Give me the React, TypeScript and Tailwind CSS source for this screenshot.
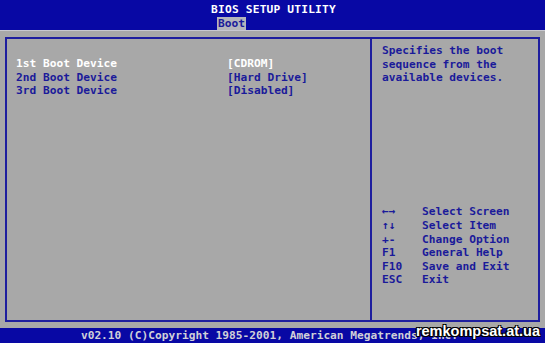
import React from "react";

const mono = { fontFamily: '"DejaVu Sans Mono", "Liberation Mono", monospace' };

export default function App() {
  const rows = [
    { label: "1st Boot Device", value: "[CDROM]", active: true },
    { label: "2nd Boot Device", value: "[Hard Drive]", active: false },
    { label: "3rd Boot Device", value: "[Disabled]", active: false },
  ];
  const keys = [
    ["←→", "Select Screen"],
    ["↑↓", "Select Item"],
    ["+-", "Change Option"],
    ["F1", "General Help"],
    ["F10", "Save and Exit"],
    ["ESC", "Exit"],
  ];
  return (
    <div
      className="relative w-[545px] h-[343px] flex flex-col bg-[#a8a8a8] overflow-hidden font-bold text-[11.2px] leading-[13.6px]"
      style={mono}
    >
      <div className="h-[30px] bg-[#0808a4] flex flex-col items-center pt-[3px]">
        <div className="text-white tracking-[0.2px] h-[14px] pl-[2px]">BIOS SETUP UTILITY</div>
        <div className="h-[13px] flex w-full justify-center">
          <div className="ml-[-82px] px-[1px] bg-[#b4b4bc] text-[#1a1a9a] leading-[13px]">Boot</div>
        </div>
      </div>
      <div className="flex-1 flex flex-col px-[5px] pt-[6px] pb-[6px] border-t border-[#c8c8d0]">
        <div className="flex-1 flex border-2 border-[#1e1e9e]">
          <div className="w-[365px] border-r-2 border-[#1e1e9e] pl-[9px] pt-[18px]">
            {rows.map((r) => (
              <div
                key={r.label}
                className={`flex ${r.active ? "text-white" : "text-[#1a1a9a]"}`}
              >
                <div className="w-[211px]">{r.label}</div>
                <div>{r.value}</div>
              </div>
            ))}
          </div>
          <div className="flex-1 flex flex-col pl-[10px] pt-[5px] pb-[33px] text-[#1a1a9a]">
            <div>Specifies the boot</div>
            <div>sequence from the</div>
            <div>available devices.</div>
            <div className="mt-auto">
              {keys.map(([k, d]) => (
                <div key={d} className="flex">
                  <div className="w-[40px]">{k}</div>
                  <div>{d}</div>
                </div>
              ))}
            </div>
          </div>
        </div>
      </div>
      <div className="h-[15px] bg-[#0808a4] text-[#d0d0d8] flex justify-center items-center leading-[15px]">
        <span className="pr-[6px]">v02.10 (C)Copyright 1985-2001, American Megatrends, Inc.</span>
      </div>
      <div
        className="absolute right-[5px] bottom-[4px] text-white text-[14.5px] leading-[15px] font-bold"
        style={{
          fontFamily: '"Liberation Sans", Arial, sans-serif',
          textShadow:
            "1px 1px 0 #000, -1px -1px 0 #000, 1px -1px 0 #000, -1px 1px 0 #000",
        }}
      >
        remkompsat.at.ua
      </div>
    </div>
  );
}
